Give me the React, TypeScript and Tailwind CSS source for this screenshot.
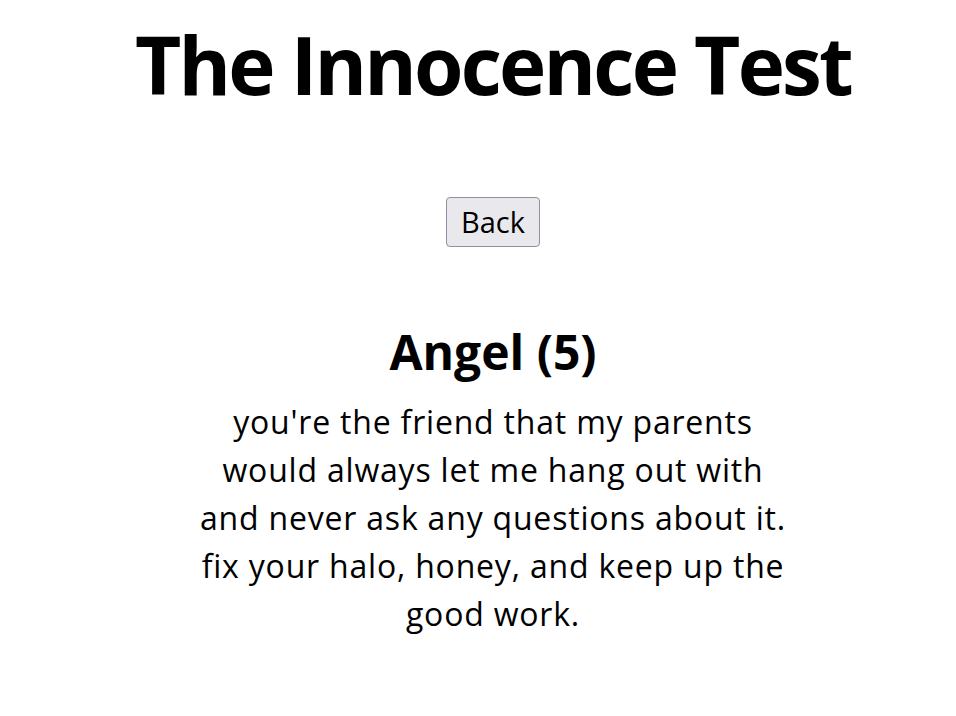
const App = () => {
  return (
    <div className="min-h-screen bg-white pl-[30px] text-center text-black font-['Open_Sans','Noto_Sans',sans-serif]">
      <h1 className="pt-[14px] text-[80px] font-bold leading-[100px] tracking-[-2.8px]">The Innocence Test</h1>

      <div className="mt-[83px]">
        <button className="rounded-[4px] border border-[#8f8f9d] bg-[#e9e9ed] px-[14px] py-[3px] text-[29px] leading-[42px]">
          Back
        </button>
      </div>

      <h2 className="mt-[77px] text-[48px] font-bold leading-[56px]">Angel (5)</h2>
      <p className="mx-auto mt-[18px] max-w-[620px] text-[32px] leading-[48px] tracking-[0.8px]">
        you're the friend that my parents
        <br />
        would always let me hang out with
        <br />
        and never ask any questions about it.
        <br />
        fix your halo, honey, and keep up the
        <br />
        good work.
      </p>
    </div>
  )
}

export default App
